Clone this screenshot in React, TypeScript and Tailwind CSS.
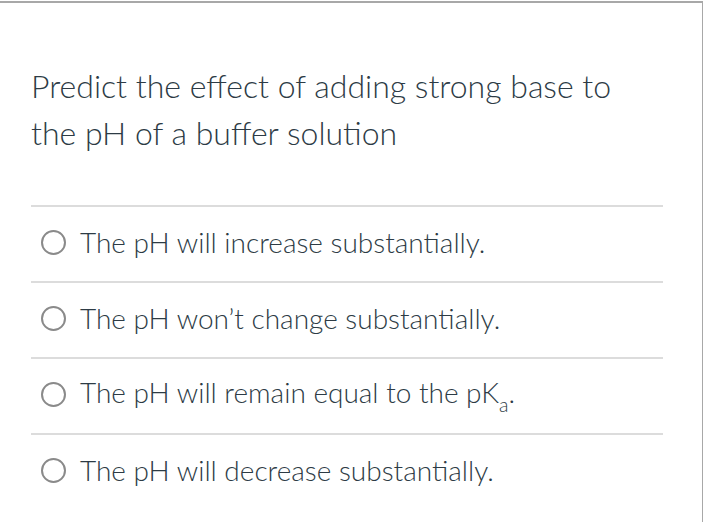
import React from 'react';

const OPTIONS: React.ReactNode[] = [
  'The pH will increase substantially.',
  'The pH won\u2019t change substantially.',
  <>
    The pH will remain equal to the pK<sub className="text-[0.7em] align-[-0.18em] leading-none">a</sub>.
  </>,
  'The pH will decrease substantially.',
];

export default function App() {
  return (
    <div className="w-[703px] h-[522px] bg-white font-['Lato','Liberation_Sans',sans-serif] font-light text-[#2d3b45] overflow-hidden">
      <div className="mt-px h-[521px] border-t-2 border-r border-[#a8a8a8]">
        <div className="pl-[31px] pr-[40px] pt-[59px]">
          <p className="text-[32px] leading-[47px] w-[620px]">
            Predict the effect of adding strong base to the pH of a buffer solution
          </p>
          <div className="mt-[49px] w-[632px]">
            {OPTIONS.map((opt, i) => (
              <div key={i} className="border-t-2 border-[#dcdcdc] h-[76px] flex items-center pl-[10px] pb-[4px]">
                <span className="w-[25px] h-[25px] rounded-full border-[2.5px] border-[#8a8a8a] shrink-0" />
                <span className="ml-[14px] text-[28px] leading-none">{opt}</span>
              </div>
            ))}
          </div>
        </div>
      </div>
    </div>
  );
}
